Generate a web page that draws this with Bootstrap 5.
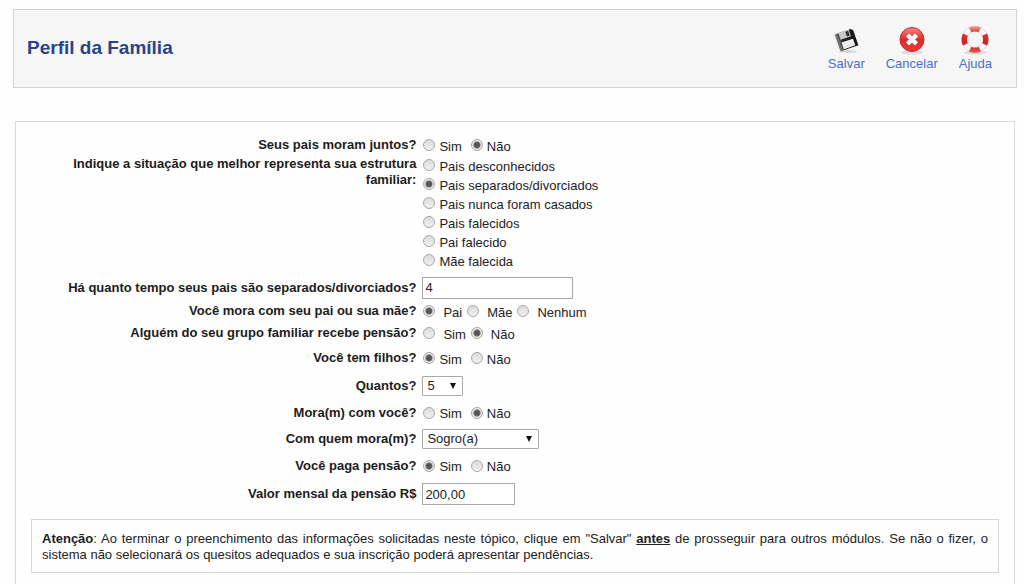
<!DOCTYPE html>
<html lang="pt-BR">
<head>
<meta charset="utf-8">
<meta name="viewport" content="width=device-width, initial-scale=1">
<title>Perfil da Família</title>
<link href="https://cdn.jsdelivr.net/npm/bootstrap@5.3.0/dist/css/bootstrap.min.css" rel="stylesheet">
<style>
  body { font-family: "Liberation Sans", Arial, sans-serif; font-size: 13px; line-height: 16px; color: #222; background: #fefefe; padding: 9px 7px 0 13px; }
  .page-head { background: #f6f6f6; border: 1px solid #d4d4d4; min-height: 79px; padding: 0 24px 2px 13px; }
  .page-title { font-size: 19px; line-height: 24px; font-weight: 700; color: #2b4389; }
  .tools { gap: 21px; }
  .tool-btn { color: #4a6fc4; text-decoration: none; }
  .tool-btn svg { width: 32px; height: 32px; }
  .panel { border: 1px solid #d9d9d9; border-bottom: 0; margin: 33px 2px 0; padding-top: 12px; }
  .questions { padding-left: 2px; }
  .q-row { display: grid; grid-template-columns: 40% 1fr; column-gap: 6px; align-items: center; min-height: 25px; }
  .q-row.tight { min-height: 22px; }
  .q-row.loose { min-height: 28px; }
  .q-row.tall { align-items: start; min-height: 119px; }
  .q-row.final { min-height: 32px; }
  .q-label { font-weight: 700; color: #1c1c1c; text-align: right; padding-left: 48px; }
  .choices { display: flex; flex-wrap: wrap; column-gap: 9px; padding-left: 1px; }
  .choices.stacked { flex-direction: column; row-gap: 1px; }
  .choice { display: flex; align-items: center; gap: 4px; height: 18px; }
  .choice span { padding-top: 3px; }
  .spaced { column-gap: 5px; }
  .spaced .choice { gap: 8px; }
  .choice input { appearance: none; width: 12px; height: 12px; margin: 0; border: 1px solid #a9a9a9; border-radius: 50%; background: linear-gradient(#dcdcdc, #f0f0f0); }
  .choice input:checked { background: radial-gradient(circle, #555 0 2px, #6a6a6a 3px, #e6e6e6 4px); }
  .box { font-size: 13px; line-height: 16px; color: #222; background-color: #fff; border: 1px solid #a9a9a9; height: 22px; padding: 0 2px; }
  .box-wide { width: 151px; }
  .box-money { width: 93px; }
  select.box { appearance: none; height: 20px; padding: 0 20px 0 4px; border-radius: 1px; background: #fff url("data:image/svg+xml,%3Csvg xmlns='http://www.w3.org/2000/svg' viewBox='0 0 6 6'%3E%3Cpath d='M0 0h6L3 6z' fill='%23111'/%3E%3C/svg%3E") no-repeat right 6px center / 6px 6px; }
  .sel-count { width: 41px; }
  .sel-who { width: 117px; }
  .notice { border: 1px solid #d6d6d6; margin: 9px 15px 0; padding: 11px 10px 9px; text-align: justify; }
</style>
</head>
<body class="d-flex flex-column min-vh-100">
<header class="page-head d-flex align-items-center justify-content-between">
  <h1 class="page-title m-0">Perfil da Família</h1>
  <nav class="tools d-flex" aria-label="Ações">
    <a href="#salvar" class="tool-btn d-flex flex-column align-items-center">
      <svg viewBox="0 0 32 32" aria-hidden="true">
        <defs><linearGradient id="disk" x2="1"><stop stop-color="#888"/><stop offset=".3" stop-color="#2a2a2a"/><stop offset="1" stop-color="#111"/></linearGradient></defs>
        <ellipse cx="18" cy="27.500" rx="9" ry="1.500" fill="#d4d4d4"/>
        <g transform="rotate(-19 16 16)">
          <path d="M7 7h17l2 2v16H7z" fill="url(#disk)"/>
          <path d="M11 7h11v7H11z" fill="#c8c8c8"/><path d="M18 8h3v5h-3z" fill="#333"/>
          <path d="M11 17h12v7H11z" fill="#f8f8f8"/><path d="M12 19h10M12 22h10" stroke="#d8d8d8"/>
        </g>
      </svg>
      <span>Salvar</span>
    </a>
    <a href="#cancelar" class="tool-btn d-flex flex-column align-items-center">
      <svg viewBox="0 0 32 32" aria-hidden="true">
        <defs><linearGradient id="red" y2="1" x2="0"><stop stop-color="#f08a8a"/><stop offset=".5" stop-color="#dc2c2c"/><stop offset="1" stop-color="#f83434"/></linearGradient></defs>
        <ellipse cx="16" cy="28.500" rx="11" ry="2" fill="#dcdcdc"/>
        <circle cx="16" cy="15.500" r="12" fill="url(#red)" stroke="#c92a2a"/>
        <path d="m11.500 11 9 9m0-9-9 9" stroke="#fff" stroke-width="4.500"/>
      </svg>
      <span>Cancelar</span>
    </a>
    <a href="#ajuda" class="tool-btn d-flex flex-column align-items-center">
      <svg viewBox="0 0 32 32" aria-hidden="true">
        <defs><linearGradient id="ring" gradientUnits="userSpaceOnUse" x1="0" x2="0" y1="2" y2="29"><stop stop-color="#f5a5a0"/><stop offset=".25" stop-color="#e0302c"/><stop offset=".7" stop-color="#d31d1d"/><stop offset="1" stop-color="#e8605a"/></linearGradient></defs>
        <ellipse cx="16" cy="28.500" rx="11" ry="2" fill="#dcdcdc"/>
        <circle cx="16" cy="15.500" r="10.800" fill="none" stroke="#d8d0d0" stroke-width="5.400"/>
        <circle cx="16" cy="15.500" r="10.800" fill="none" stroke="#fcfcfc" stroke-width="4.200"/>
        <circle cx="16" cy="15.500" r="10.800" fill="none" stroke="url(#ring)" stroke-width="5.400" pathLength="80" stroke-dasharray="12 8" stroke-dashoffset="6"/>
      </svg>
      <span>Ajuda</span>
    </a>
  </nav>
</header>

<main class="panel flex-grow-1">
  <form class="questions">
    <div class="q-row tight">
      <div class="q-label" id="q1">Seus pais moram juntos?</div>
      <div class="choices" role="radiogroup" aria-labelledby="q1">
        <label class="choice"><input type="radio" name="juntos"><span>Sim</span></label>
        <label class="choice"><input type="radio" name="juntos" checked><span>Não</span></label>
      </div>
    </div>
    <div class="q-row tall">
      <div class="q-label" id="q2">Indique a situação que melhor representa sua estrutura familiar:</div>
      <div class="choices stacked" role="radiogroup" aria-labelledby="q2">
        <label class="choice"><input type="radio" name="estrutura"><span>Pais desconhecidos</span></label>
        <label class="choice"><input type="radio" name="estrutura" checked><span>Pais separados/divorciados</span></label>
        <label class="choice"><input type="radio" name="estrutura"><span>Pais nunca foram casados</span></label>
        <label class="choice"><input type="radio" name="estrutura"><span>Pais falecidos</span></label>
        <label class="choice"><input type="radio" name="estrutura"><span>Pai falecido</span></label>
        <label class="choice"><input type="radio" name="estrutura"><span>Mãe falecida</span></label>
      </div>
    </div>
    <div class="q-row">
      <label class="q-label" for="tempo">Há quanto tempo seus pais são separados/divorciados?</label>
      <div class="d-flex"><input type="text" class="box box-wide" id="tempo" value="4"></div>
    </div>
    <div class="q-row tight">
      <div class="q-label" id="q4">Você mora com seu pai ou sua mãe?</div>
      <div class="choices spaced" role="radiogroup" aria-labelledby="q4">
        <label class="choice"><input type="radio" name="mora" checked><span>Pai</span></label>
        <label class="choice"><input type="radio" name="mora"><span>Mãe</span></label>
        <label class="choice"><input type="radio" name="mora"><span>Nenhum</span></label>
      </div>
    </div>
    <div class="q-row tight">
      <div class="q-label" id="q5">Alguém do seu grupo familiar recebe pensão?</div>
      <div class="choices spaced" role="radiogroup" aria-labelledby="q5">
        <label class="choice"><input type="radio" name="recebe"><span>Sim</span></label>
        <label class="choice"><input type="radio" name="recebe" checked><span>Não</span></label>
      </div>
    </div>
    <div class="q-row loose">
      <div class="q-label" id="q6">Você tem filhos?</div>
      <div class="choices" role="radiogroup" aria-labelledby="q6">
        <label class="choice"><input type="radio" name="filhos" checked><span>Sim</span></label>
        <label class="choice"><input type="radio" name="filhos"><span>Não</span></label>
      </div>
    </div>
    <div class="q-row loose">
      <label class="q-label" for="quantos">Quantos?</label>
      <div class="d-flex"><select class="box sel-count" id="quantos"><option>1</option><option>2</option><option>3</option><option>4</option><option selected>5</option></select></div>
    </div>
    <div class="q-row">
      <div class="q-label" id="q8">Mora(m) com você?</div>
      <div class="choices" role="radiogroup" aria-labelledby="q8">
        <label class="choice"><input type="radio" name="comvoce"><span>Sim</span></label>
        <label class="choice"><input type="radio" name="comvoce" checked><span>Não</span></label>
      </div>
    </div>
    <div class="q-row loose">
      <label class="q-label" for="quem">Com quem mora(m)?</label>
      <div class="d-flex"><select class="box sel-who" id="quem"><option>Sogro(a)</option></select></div>
    </div>
    <div class="q-row">
      <div class="q-label" id="q10">Você paga pensão?</div>
      <div class="choices" role="radiogroup" aria-labelledby="q10">
        <label class="choice"><input type="radio" name="paga" checked><span>Sim</span></label>
        <label class="choice"><input type="radio" name="paga"><span>Não</span></label>
      </div>
    </div>
    <div class="q-row final">
      <label class="q-label" for="valor">Valor mensal da pensão R$</label>
      <div class="d-flex"><input type="text" class="box box-money" id="valor" value="200,00"></div>
    </div>
  </form>
  <p class="notice"><strong>Atenção</strong>: Ao terminar o preenchimento das informações solicitadas neste tópico, clique em "Salvar" <strong><u>antes</u></strong> de prosseguir para outros módulos. Se não o fizer, o sistema não selecionará os quesitos adequados e sua inscrição poderá apresentar pendências.</p>
</main>
<script src="https://cdn.jsdelivr.net/npm/bootstrap@5.3.0/dist/js/bootstrap.bundle.min.js"></script>
</body>
</html>
